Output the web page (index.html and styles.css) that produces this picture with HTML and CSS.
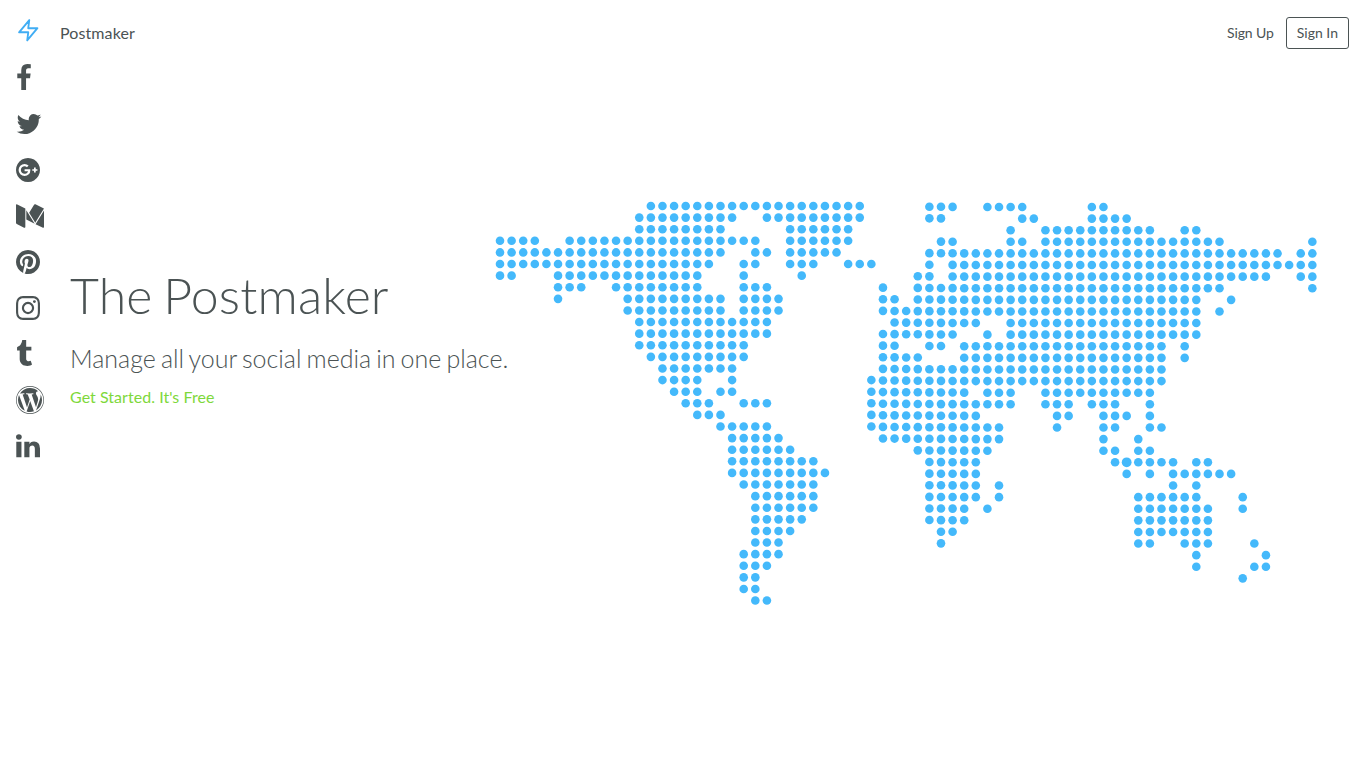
FILE: index.html
```html
<!DOCTYPE html>
<html lang="en">
<head>
<meta charset="utf-8">
<title>Postmaker</title>
<link rel="stylesheet" href="styles.css">
</head>
<body>
<div class="page">
  <aside class="sidebar">
    <a class="logo" href="#" aria-label="Postmaker"><svg viewBox="0 0 24 24"><path d="M13 2 3 14h9l-1 8 10-12h-9z"/></svg></a>
    <nav class="networks">
      <a href="#" aria-label="Facebook"><svg viewBox="397 0 1792 1792"><path d="M1343 12v264h-157q-86 0-116 36t-30 108v189h293l-39 296h-254v759h-306v-759h-255v-296h255v-218q0-186 104-288.5t277-102.5q147 0 228 12z"/></svg></a>
      <a href="#" aria-label="Twitter"><svg viewBox="64 0 1792 1792"><path d="M1684 408q-67 98-162 167 1 14 1 42 0 130-38 259.5t-115.5 248.5-184.5 210.5-258 146-323 54.5q-271 0-496-145 35 4 78 4 225 0 401-138-105-2-188-64.5t-114-159.5q33 5 61 5 43 0 85-11-112-23-185.5-111.5t-73.5-205.5v-4q68 38 146 41-66-44-105-115t-39-154q0-88 44-163 121 149 294.5 238.5t371.5 99.5q-8-38-8-74 0-134 94.5-228.5t228.5-94.5q140 0 236 102 109-21 205-78-37 115-142 178 93-10 186-50z"/></svg></a>
      <a href="#" aria-label="Google Plus"><svg viewBox="128 0 1792 1792"><path d="M1045 905q0-26-6-64h-362v132h217q-3 24-16.5 50t-37.5 53-66.5 44.5-96.5 17.5q-99 0-169-71t-70-171 70-171 169-71q92 0 153 59l104-101q-108-100-257-100-160 0-272 112.5t-112 271.5 112 271.5 272 112.5q165 0 266.5-105t101.5-270zm345 46h109v-110h-109v-110h-110v110h-110v110h110v110h110v-110zm274-55q0 209-103 385.5t-279.5 279.5-385.5 103-385.5-103-279.5-279.5-103-385.5 103-385.5 279.5-279.5 385.5-103 385.5 103 279.5 279.5 103 385.5z"/></svg></a>
      <a href="#" aria-label="Medium"><svg viewBox="0 0 1792 1792"><path d="M597 421v1173q0 25-12.5 42.5t-36.5 17.5q-17 0-33-8l-465-233q-21-10-35.5-33.5t-14.5-46.5v-1140q0-20 10-34t29-14q14 0 44 15l511 256q3 3 3 5zm64 101l534 866-534-266v-600zm1131 18v1054q0 25-14 40.5t-38 15.5-47-13l-441-220zm-3-120q0 3-256.5 419.5t-300.5 487.5l-390-634 324-527q17-28 52-28 14 0 26 6l541 270q4 2 4 6z"/></svg></a>
      <a href="#" aria-label="Pinterest"><svg viewBox="128 0 1792 1792"><path d="M1664 896q0 209-103 385.5t-279.5 279.5-385.5 103q-111 0-218-32 59-93 78-164 9-34 54-211 20 39 73 67.5t114 28.5q121 0 216-68.5t147-188.5 52-270q0-114-59.5-214t-172.5-163-255-63q-105 0-196 29t-154.5 77-109 110.5-67 129.5-21.5 134q0 104 40 183t117 111q30 12 38-20 2-7 8-31t8-30q6-23-11-43-51-61-51-151 0-151 104.5-259.5t273.5-108.5q151 0 235.5 82t84.5 213q0 170-68.5 289t-175.5 119q-61 0-98-43.5t-23-104.5q8-35 26.5-93.5t30-103 11.5-75.5q0-50-27-83t-77-33q-62 0-105 57t-43 142q0 73 25 122l-99 418q-17 70-13 177-206-91-333-281t-127-423q0-209 103-385.5t279.5-279.5 385.5-103 385.5 103 279.5 279.5 103 385.5z"/></svg></a>
      <a href="#" aria-label="Instagram"><svg viewBox="128 0 1792 1792"><path d="M1152 896q0-106-75-181t-181-75-181 75-75 181 75 181 181 75 181-75 75-181zm138 0q0 164-115 279t-279 115-279-115-115-279 115-279 279-115 279 115 115 279zm108-410q0 38-27 65t-65 27-65-27-27-65 27-65 65-27 65 27 27 65zm-502-220q-7 0-76.5-.5t-105.5 0-96.5 3-103 10-71.5 18.5q-50 20-88 58t-58 88q-11 29-18.5 71.5t-10 103-3 96.5 0 105.5.5 76.5-.5 76.5 0 105.5 3 96.5 10 103 18.5 71.5q20 50 58 88t88 58q29 11 71.5 18.5t103 10 96.5 3 105.5 0 76.5-.5 76.5.5 105.5 0 96.5-3 103-10 71.5-18.5q50-20 88-58t58-88q11-29 18.5-71.5t10-103 3-96.5 0-105.5-.5-76.5.5-76.5 0-105.5-3-96.5-10-103-18.5-71.5q-20-50-58-88t-88-58q-29-11-71.5-18.5t-103-10-96.5-3-105.5 0-76.5.5zm768 630q0 229-5 317-10 208-124 322t-322 124q-88 5-317 5t-317-5q-208-10-322-124t-124-322q-5-88-5-317t5-317q10-208 124-322t322-124q88-5 317-5t317 5q208 10 322 124t124 322q5 88 5 317z"/></svg></a>
      <a href="#" aria-label="Tumblr"><svg viewBox="384 0 1792 1792"><path d="M1328 1329l80 237q-23 35-111 66t-177 32q-104 2-190.5-26t-142.5-74-95-106-55.5-120-16.5-118v-544h-168v-215q72-26 129-69.5t91-90 58-102 34-99 15-88.5q1-5 4.5-8.5t7.5-3.5h244v424h333v252h-334v518q0 30 6.5 56t22.5 52.5 49.5 41.5 81.5 14q78-2 134-29z"/></svg></a>
      <a href="#" aria-label="WordPress"><svg viewBox="0 0 1792 1792"><path d="M127 896q0-163 67-313l367 1005q-196-95-315-281t-119-411zm1288-39q0 19-2.5 38.5t-10 49.5-11.5 44-17.5 59-17.5 58l-76 256-278-826q46-3 88-8 19-2 26-18.5t-2.5-31-28.5-13.5l-205 10q-75-1-202-10-12-1-20.5 5t-11.5 15-1.5 18.5 9 16.5 19.5 8l80 8 120 328-168 504-280-832q46-3 88-8 19-2 26-18.5t-2.5-31-28.5-13.5l-205 10q-7 0-23-.5t-26-.5q105-160 274.5-253.5t367.5-93.5q147 0 280.5 53t238.5 149h-10q-55 0-92 40.5t-37 95.5q0 12 2 24t4 21.5 8 23 9 21 12 22.5 12.5 21 14.5 24 14 23q63 107 63 212zm-506 106l237 647q1 6 5 11-126 44-255 44-112 0-217-32zm661-436q95 174 95 369 0 209-104 385.5t-279 278.5l235-678q59-169 59-276 0-42-6-79zm-674-527q182 0 348 71t286 191 191 286 71 348-71 348-191 286-286 191-348 71-348-71-286-191-191-286-71-348 71-348 191-286 286-191 348-71zm0 1751q173 0 331.5-68t273-182.5 182.5-273 68-331.5-68-331.5-182.5-273-273-182.5-331.5-68-331.5 68-273 182.5-182.5 273-68 331.5 68 331.5 182.5 273 273 182.5 331.5 68z"/></svg></a>
      <a href="#" aria-label="LinkedIn"><svg viewBox="128 0 1792 1792"><path d="M477 625v991h-330v-991h330zm21-306q1 73-50.5 122t-135.5 49h-2q-82 0-132-49t-50-122q0-74 51.5-122.5t134.5-48.5 133 48.5 51 122.5zm1166 729v568h-329v-530q0-105-40.5-164.5t-126.5-59.5q-63 0-105.5 34.5t-63.5 85.5q-11 30-11 81v553h-329q2-399 2-647t-1-296l-1-47h329v144h-2q20-32 41-56t56.5-52 87-43.5 114.5-15.5q171 0 275 113.5t104 332.5z"/></svg></a>
    </nav>
  </aside>
  <div class="content">
    <header class="topbar">
      <a class="brand" href="#">Postmaker</a>
      <div class="account">
        <a class="signup" href="#">Sign Up</a>
        <a class="signin" href="#">Sign In</a>
      </div>
    </header>
    <main class="hero">
      <div class="intro">
        <h1>The Postmaker</h1>
        <p class="tagline">Manage all your social media in one place.</p>
        <a class="cta" href="#">Get Started. It's Free</a>
      </div>
      <svg class="map" viewBox="-6 -6 824 407" role="img" aria-label="World map"></svg>
    </main>
  </div>
</div>
<script src="map.js"></script>
</body>
</html>
```
FILE: styles.css
```css
* { box-sizing: border-box; }

body {
  margin: 0;
  background: #fff;
  color: #4b5354;
  font-family: Lato, sans-serif;
  font-size: 16px;
}

a { color: inherit; text-decoration: none; }

.page {
  display: flex;
  height: 767px;
  overflow: hidden;
}

.sidebar {
  flex: 0 0 60px;
  padding: 18px 0 0 16px;
}

.logo { display: block; height: 46px; }

.logo svg {
  display: block;
  width: 24.5px;
  height: 24.5px;
  fill: none;
  stroke: #40adf4;
  stroke-width: 1.8;
  stroke-linejoin: round;
}

.networks {
  display: flex;
  flex-direction: column;
  gap: 18px;
}

.networks a, .networks svg {
  display: block;
  width: 28px;
  height: 28px;
}

.networks svg { fill: #4b5354; }

.content { flex: 1; }

.topbar {
  display: flex;
  align-items: center;
  justify-content: space-between;
  height: 66px;
  padding-right: 17px;
}

.brand {
  padding-bottom: 2px;
  letter-spacing: 0.1px;
}

.account {
  display: flex;
  align-items: center;
  gap: 12px;
  font-size: 14px;
}

.signup {
  padding-bottom: 1px;
  letter-spacing: -0.1px;
}

.signin {
  height: 32px;
  padding: 0 10px;
  border: 1px solid #4b5354;
  border-radius: 3px;
  line-height: 30px;
}

.hero {
  display: grid;
  grid-template-columns: 434px 824px;
  padding-left: 10px;
}

.intro {
  padding-top: 199px;
  white-space: nowrap;
}

h1 {
  margin: 0;
  font-size: 50px;
  font-weight: 300;
  line-height: 60px;
  letter-spacing: 0.15px;
  word-spacing: -3px;
}

.tagline {
  margin: 17px 0 0;
  font-size: 25px;
  font-weight: 300;
  line-height: 32px;
  word-spacing: -1.7px;
}

.cta {
  display: block;
  margin-top: 13px;
  color: #7ed83b;
  line-height: 20px;
  letter-spacing: 0.04px;
}

.map {
  width: 824px;
  height: 407px;
  margin: 134.3px 0 0 -10px;
  fill: #44b9fb;
}
```
FILE: map.js
```js
// Each row lists inclusive column runs of land dots.
const rows = [
  "13-31 37-39 42-45 51-52",
  "12-20 23-31 37-38 45-46 51-54",
  "12-19 25-30 44 47-56 59-60",
  "0-3 6-22 25-30 38-39 44-45 47-62 70",
  "0-19 22-23 25-29 37-67 69-70",
  "0-18 21-22 25-27 30-32 37 39-70",
  "0-1 5-17 21 26 36-37 39-66 69-70",
  "5-7 10-17 21-23 33 36-62 70",
  "5 11-19 21-24 33-34 36-60 63",
  "11-19 21-24 33-60 62",
  "12-23 34-41 44-60",
  "12-23 33-39 42 44-60",
  "12-21 33-34 37-38 40-57 59",
  "13-21 33-36 40-57 59",
  "14-20 33-57",
  "14-17 20 32-57",
  "15-17 19-20 32-40 42-44 47-56",
  "16-18 21-23 32-44 47-49 51-53 56",
  "17-19 32-41 48-49 52-54 56",
  "19-23 32-43 48 52-53 56-57",
  "20-24 33-43 52 55",
  "20-25 36-42 52-53 55-56",
  "20-27 37-41 53-58 60-61",
  "20-28 37-41 54 56 58-63",
  "21-27 37-41 43 58 60",
  "22-27 37-41 43 55-60 64",
  "22-27 37-40 42 55-61 64",
  "22-26 37-40 55-61",
  "22-25 38-39 55-61",
  "22-24 38 55-56 59-61 65",
  "21-24 60 66",
  "21-23 60 65-66",
  "21-22 64",
  "21-22",
  "22-23"
];
const pitch = 11.605;
const map = document.querySelector(".map");
rows.forEach((row, r) => {
  row.split(" ").forEach(run => {
    const [from, to = from] = run.split("-").map(Number);
    for (let c = from; c <= to; c++) {
      const dot = document.createElementNS("http://www.w3.org/2000/svg", "circle");
      dot.setAttribute("cx", c * pitch);
      dot.setAttribute("cy", r * pitch + (c > 32 ? Math.min(1, (c - 28) * 0.08) : 0));
      dot.setAttribute("r", r === 22 && c === 54 ? 4.9 : 4.3);
      map.append(dot);
    }
  });
});
```
